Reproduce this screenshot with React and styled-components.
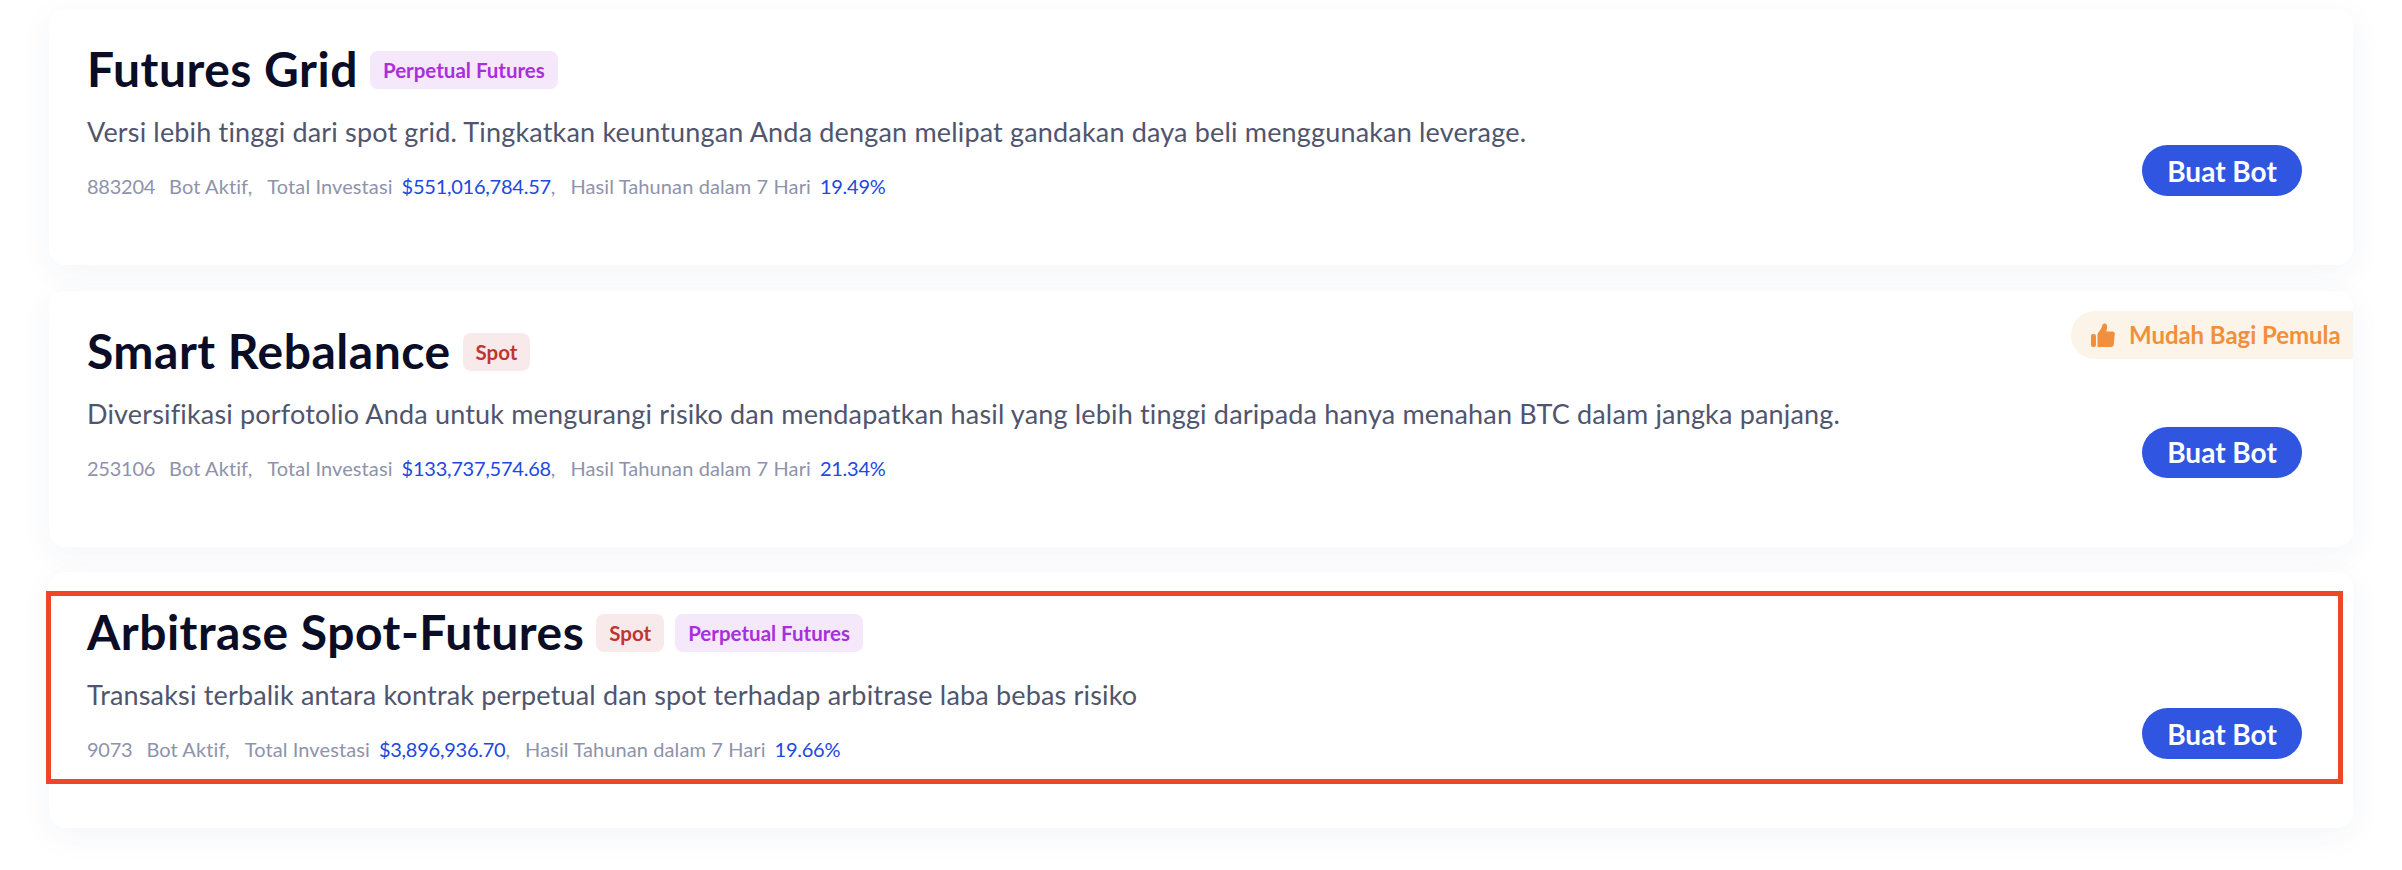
import React from "react";
import styled, { createGlobalStyle } from "styled-components";

const GlobalStyle = createGlobalStyle`
    html, body {
        margin: 0;
        padding: 0;
        background: #fff;
        font-family: "Lato", "Noto Sans", sans-serif;
    }
`;

const Page = styled.div`
    height: 870px;
    box-sizing: border-box;
    padding: 9px 49px 0;
    display: flex;
    flex-direction: column;
    gap: 25.5px;
    overflow: hidden;
`;

const Card = styled.section`
    position: relative;
    height: 256px;
    flex: none;
    box-sizing: border-box;
    padding: 31px 51px 69px 38px;
    display: flex;
    justify-content: space-between;
    align-items: flex-end;
    background: #fff;
    border-radius: 16px;
    box-shadow: 0 8px 32px rgba(40, 50, 110, 0.05);
`;

const Info = styled.div`
    align-self: flex-start;
`;

const TitleRow = styled.div`
    display: flex;
    align-items: center;
    gap: 11px;
    height: 58px;
`;

const Title = styled.h2`
    margin: 0 1px 0 0;
    font-size: 48px;
    font-weight: 700;
    line-height: 58px;
    letter-spacing: 0.5px;
    color: #0a0d25;
`;

const tagColors = {
    spot: { bg: "#f8eaea", fg: "#c0352f" },
    perp: { bg: "#f6e8fb", fg: "#a92fdc" },
};

const Tag = styled.span`
    height: 38px;
    margin-top: 2px;
    padding: 0 13px;
    display: flex;
    align-items: center;
    border-radius: 8px;
    font-size: 20.5px;
    font-weight: 700;
    background: ${props => tagColors[props.$kind].bg};
    color: ${props => tagColors[props.$kind].fg};
`;

const Description = styled.p`
    margin: 16px 0 0;
    font-size: 27px;
    line-height: 36px;
    letter-spacing: 0.17px;
    color: #50556e;
`;

const Stats = styled.div`
    margin-top: 22px;
    display: flex;
    font-size: 20px;
    line-height: 28px;
    letter-spacing: 0.1px;
    color: #8e93ab;
    white-space: pre;
`;

const Value = styled.span`
    color: #2148e0;
    margin-left: 9px;
    letter-spacing: -0.25px;
`;

const Count = styled.span`
    margin-right: 14px;
    letter-spacing: -0.25px;
`;

const Comma = styled.span`
    margin-right: 15px;
`;

const BotButton = styled.button`
    width: 160px;
    height: 51px;
    padding: 0;
    border: none;
    border-radius: 26px;
    background: #3055e0;
    color: #fff;
    font-family: inherit;
    font-size: 28px;
    font-weight: 700;
`;

const Ribbon = styled.div`
    position: absolute;
    top: 20px;
    right: 0;
    width: 282px;
    height: 48px;
    box-sizing: border-box;
    padding-left: 20px;
    display: flex;
    align-items: center;
    gap: 14px;
    border-radius: 24px 0 0 24px;
    background: #fcf3e9;
    color: #f28f3d;
    font-size: 24px;
    font-weight: 700;
    letter-spacing: -0.05px;
    white-space: nowrap;
`;

const Highlight = styled.div`
    position: absolute;
    left: -3px;
    right: 10px;
    top: 18.5px;
    height: 193px;
    box-sizing: border-box;
    border: 5px solid #ef4627;
    pointer-events: none;
`;

const ThumbIcon = () => (
    <svg width="24" height="24" viewBox="0 0 24 24" fill="#f28f3d">
        <rect x="0" y="11" width="5" height="13" rx="2" />
        <path d="M6.5 11 L10.5 5 C11 3 11.5 0.5 13.5 0.5 C16 0.5 16.5 3 16 5.5 L15.3 8.5 L21.5 8.5 C23 8.5 24 9.5 23.8 11 L22.8 21.5 C22.6 23 21.6 24 20 24 L6.5 24 Z" />
    </svg>
);

const bots = [
    {
        name: "Futures Grid",
        tags: ["perp"],
        text: "Versi lebih tinggi dari spot grid. Tingkatkan keuntungan Anda dengan melipat gandakan daya beli menggunakan leverage.",
        count: "883204",
        invest: "$551,016,784.57",
        apy: "19.49%",
    },
    {
        name: "Smart Rebalance",
        tags: ["spot"],
        text: "Diversifikasi porfotolio Anda untuk mengurangi risiko dan mendapatkan hasil yang lebih tinggi daripada hanya menahan BTC dalam jangka panjang.",
        count: "253106",
        invest: "$133,737,574.68",
        apy: "21.34%",
        beginner: true,
    },
    {
        name: "Arbitrase Spot-Futures",
        tags: ["spot", "perp"],
        text: "Transaksi terbalik antara kontrak perpetual dan spot terhadap arbitrase laba bebas risiko",
        count: "9073",
        invest: "$3,896,936.70",
        apy: "19.66%",
        marked: true,
    },
];

const tagLabels = { spot: "Spot", perp: "Perpetual Futures" };

export default function App() {
    return (
        <Page>
            <GlobalStyle />
            {bots.map(bot => (
                <Card key={bot.name}>
                    <Info>
                        <TitleRow>
                            <Title>{bot.name}</Title>
                            {bot.tags.map(tag => (
                                <Tag key={tag} $kind={tag}>{tagLabels[tag]}</Tag>
                            ))}
                        </TitleRow>
                        <Description>{bot.text}</Description>
                        <Stats>
                            <Count>{bot.count}</Count>
                            <span>Bot Aktif,</span>
                            <Comma />
                            <span>Total Investasi</span>
                            <Value>{bot.invest}</Value>
                            <span>,</span>
                            <Comma />
                            <span>Hasil Tahunan dalam 7 Hari</span>
                            <Value>{bot.apy}</Value>
                        </Stats>
                    </Info>
                    <BotButton>Buat Bot</BotButton>
                    {bot.beginner && (
                        <Ribbon>
                            <ThumbIcon />
                            Mudah Bagi Pemula
                        </Ribbon>
                    )}
                    {bot.marked && <Highlight />}
                </Card>
            ))}
        </Page>
    );
}
